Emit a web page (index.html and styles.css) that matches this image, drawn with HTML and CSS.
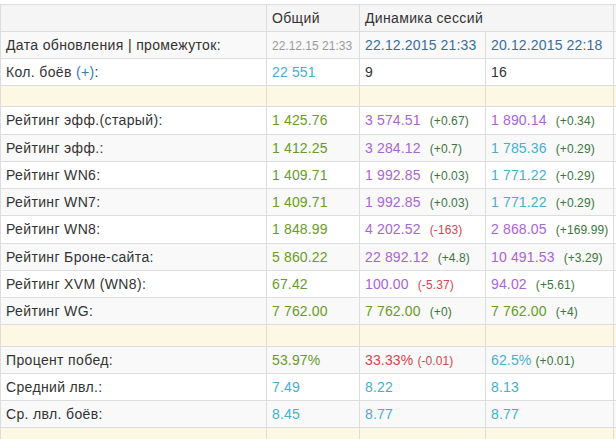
FILE: index.html
```html
<!DOCTYPE html>
<html lang="ru">
<head>
<meta charset="utf-8">
<title>Статистика</title>
<link rel="stylesheet" href="styles.css">
</head>
<body>
<div class="wrap">
<table class="stats">
  <colgroup>
    <col class="c1"><col class="c2"><col class="c3"><col class="c4"><col class="c5">
  </colgroup>
  <thead>
    <tr class="head">
      <td></td>
      <td class="lbl">Общий</td>
      <td colspan="2" class="lbl">Динамика сессий</td>
      <td></td>
    </tr>
  </thead>
  <tbody>
    <tr class="odd">
      <td class="lbl">Дата обновления | промежуток:</td>
      <td><span class="small gray">22.12.15 21:33</span></td>
      <td><span class="date">22.12.2015 21:33</span></td>
      <td><span class="date">20.12.2015 22:18</span></td>
      <td></td>
    </tr>
    <tr>
      <td class="lbl">Кол. боёв <span class="link">(+)</span>:</td>
      <td><span class="blue">22 551</span></td>
      <td>9</td>
      <td>16</td>
      <td></td>
    </tr>
    <tr class="spacer s1"><td></td><td></td><td></td><td></td><td></td></tr>
    <tr class="r">
      <td class="lbl">Рейтинг эфф.(старый):</td>
      <td><span class="green">1 425.76</span></td>
      <td><span class="purple">3 574.51</span><span class="d up wide">(+0.67)</span></td>
      <td><span class="purple">1 890.14</span><span class="d up wide">(+0.34)</span></td>
      <td></td>
    </tr>
    <tr class="odd">
      <td class="lbl">Рейтинг эфф.:</td>
      <td><span class="green">1 412.25</span></td>
      <td><span class="purple">3 284.12</span><span class="d up wide">(+0.7)</span></td>
      <td><span class="blue">1 785.36</span><span class="d up wide">(+0.29)</span></td>
      <td></td>
    </tr>
    <tr>
      <td class="lbl">Рейтинг WN6:</td>
      <td><span class="green">1 409.71</span></td>
      <td><span class="purple">1 992.85</span><span class="d up wide">(+0.03)</span></td>
      <td><span class="blue">1 771.22</span><span class="d up wide">(+0.29)</span></td>
      <td></td>
    </tr>
    <tr class="odd">
      <td class="lbl">Рейтинг WN7:</td>
      <td><span class="green">1 409.71</span></td>
      <td><span class="purple">1 992.85</span><span class="d up wide">(+0.03)</span></td>
      <td><span class="blue">1 771.22</span><span class="d up wide">(+0.29)</span></td>
      <td></td>
    </tr>
    <tr class="tall">
      <td class="lbl">Рейтинг WN8:</td>
      <td><span class="green">1 848.99</span></td>
      <td><span class="purple">4 202.52</span><span class="d down wide">(-163)</span></td>
      <td><span class="purple">2 868.05</span><span class="d up wide">(+169.99)</span></td>
      <td></td>
    </tr>
    <tr class="odd">
      <td class="lbl">Рейтинг Броне-сайта:</td>
      <td><span class="green">5 860.22</span></td>
      <td><span class="purple">22 892.12</span><span class="d up wide">(+4.8)</span></td>
      <td><span class="purple">10 491.53</span><span class="d up wide">(+3.29)</span></td>
      <td></td>
    </tr>
    <tr>
      <td class="lbl">Рейтинг XVM (WN8):</td>
      <td><span class="green">67.42</span></td>
      <td><span class="purple">100.00</span><span class="d down wide">(-5.37)</span></td>
      <td><span class="purple">94.02</span><span class="d up wide">(+5.61)</span></td>
      <td></td>
    </tr>
    <tr class="odd">
      <td class="lbl">Рейтинг WG:</td>
      <td><span class="green">7 762.00</span></td>
      <td><span class="green">7 762.00</span><span class="d up wide">(+0)</span></td>
      <td><span class="green">7 762.00</span><span class="d up wide">(+4)</span></td>
      <td></td>
    </tr>
    <tr class="spacer s2"><td></td><td></td><td></td><td></td><td></td></tr>
    <tr class="odd">
      <td class="lbl">Процент побед:</td>
      <td><span class="green">53.97%</span></td>
      <td><span class="red">33.33%</span><span class="d down">(-0.01)</span></td>
      <td><span class="blue">62.5%</span><span class="d up">(+0.01)</span></td>
      <td></td>
    </tr>
    <tr>
      <td class="lbl">Средний лвл.:</td>
      <td><span class="blue">7.49</span></td>
      <td><span class="blue">8.22</span></td>
      <td><span class="blue">8.13</span></td>
      <td></td>
    </tr>
    <tr class="odd">
      <td class="lbl">Ср. лвл. боёв:</td>
      <td><span class="blue">8.45</span></td>
      <td><span class="blue">8.77</span></td>
      <td><span class="blue">8.77</span></td>
      <td></td>
    </tr>
    <tr class="spacer s3"><td></td><td></td><td></td><td></td><td></td></tr>
  </tbody>
</table>
</div>
</body>
</html>
```

FILE: styles.css
```css
html, body {
  margin: 0;
  padding: 0;
  background: #fff;
  overflow: hidden;
}
.wrap {
  padding-top: 4px;
  width: 700px;
}
.stats {
  border-collapse: separate;
  border-spacing: 0;
  table-layout: fixed;
  width: 653px;
  font-family: "Liberation Sans", Arial, sans-serif;
  font-size: 14px;
  letter-spacing: 0.15px;
  color: #333;
}
.c1 { width: 266px; }
.c2 { width: 93px; }
.c3 { width: 126px; }
.c4 { width: 128px; }
.c5 { width: 40px; }
.stats td {
  border-top: 1px solid #ddd;
  border-left: 1px solid #ddd;
  padding: 3px 4px 3px 5px;
  line-height: 20px;
  white-space: nowrap;
  overflow: hidden;
  vertical-align: middle;
}
.stats .tall td,
.stats .r td { padding-bottom: 4px; }
.stats td.lbl { letter-spacing: 0.35px; }
.head td { background: #f5f5f5; }
.odd td { background: #f9f9f9; }
.spacer td {
  background: #fcf8e3;
  padding: 0;
  line-height: 0;
}
.spacer.s1 td { height: 20px; }
.spacer.s2 td { height: 21px; }
.spacer.s3 td { height: 30px; }
.small {
  font-size: 12px;
  line-height: 1;
  letter-spacing: 0;
}
.gray { color: #999; }
.date { color: #3b6d9b; }
.link { color: #337ab7; }
.blue { color: #45b0cf; }
.green { color: #679c29; }
.purple { color: #a964d8; }
.red { color: #e0414b; }
.d {
  font-size: 12px;
  line-height: 1;
  letter-spacing: 0.1px;
  margin-left: 4px;
}
.d.wide { margin-left: 9px; }
.up { color: #3c763d; }
.down { color: #e0414b; }
```
